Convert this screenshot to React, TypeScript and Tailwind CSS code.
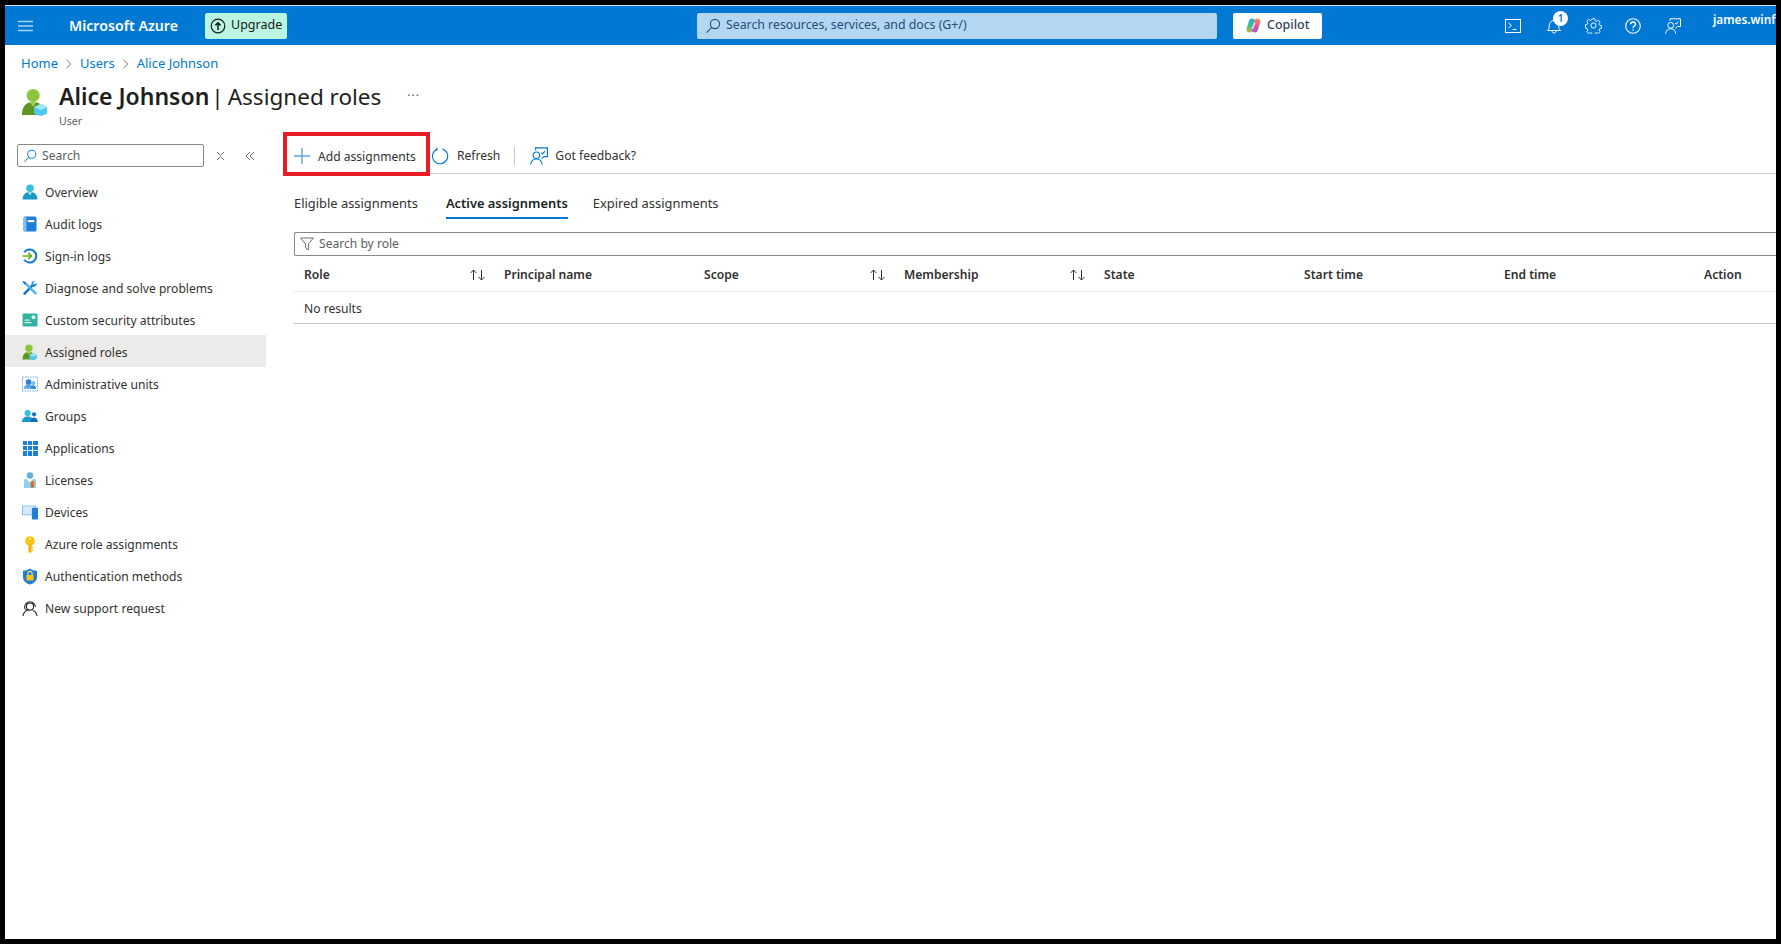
import React from "react";

function Hamburger() {
  return (
    <svg width="15" height="12" viewBox="0 0 15 12" fill="none" stroke="#a9d3f2" strokeWidth="1.3">
      <path d="M0 1.5h15M0 6h15M0 10.5h15" />
    </svg>
  );
}
function SearchGlass({ color = "#0078d4", size = 16 }: { color?: string; size?: number }) {
  return (
    <svg width={size} height={size} viewBox="0 0 16 16" fill="none" stroke={color} strokeWidth="1.1">
      <circle cx="10" cy="6" r="4.6" />
      <path d="M6.7 9.3 1.6 14.6" />
    </svg>
  );
}
function UpgradeIcon() {
  return (
    <svg width="16" height="16" viewBox="0 0 16 16" fill="none" stroke="#1b1b1b" strokeWidth="1.2">
      <circle cx="8" cy="8" r="6.8" />
      <path d="M8 12V5M5.4 7.4 8 4.8l2.6 2.6" strokeWidth="1.5" />
    </svg>
  );
}
function CopilotLogo() {
  return (
    <svg width="17" height="17" viewBox="0 0 17 17" fill="none" strokeLinecap="round">
      <defs>
        <linearGradient id="cpL" gradientUnits="userSpaceOnUse" x1="5" y1="1" x2="5" y2="16">
          <stop offset="0" stopColor="#1f9fe8" />
          <stop offset=".55" stopColor="#3ec48a" />
          <stop offset="1" stopColor="#f6a623" />
        </linearGradient>
        <linearGradient id="cpR" gradientUnits="userSpaceOnUse" x1="12" y1="1" x2="12" y2="16">
          <stop offset="0" stopColor="#f79a3e" />
          <stop offset=".5" stopColor="#e8559a" />
          <stop offset="1" stopColor="#8a5cf0" />
        </linearGradient>
      </defs>
      <path d="M7 4.500 4.500 12.500" stroke="url(#cpL)" strokeWidth="6" />
      <path d="M12.300 4.500 9.900 12.500" stroke="url(#cpR)" strokeWidth="6" />
      <path d="M9.700 6 7.500 11.500" stroke="#fff" strokeWidth="1.300" opacity=".9" />
    </svg>
  );
}
function TerminalIcon() {
  return (
    <svg width="16" height="16" viewBox="0 0 16 16" fill="none" stroke="#fff" strokeWidth="1">
      <rect x=".5" y="1.500" width="15" height="13" />
      <path d="m3.500 5 3 2.500-3 2.500M7.500 11.500h4" />
    </svg>
  );
}
function BellIcon() {
  return (
    <svg width="16" height="18" viewBox="0 0 16 18" fill="none" stroke="#fff" strokeWidth="1">
      <path d="M1.500 13.500c1.400-1.400 1.800-2.600 1.800-5 0-3 2-5 4.700-5s4.700 2 4.700 5c0 2.400.4 3.600 1.800 5Z" />
      <path d="M6 13.800c0 1.400.9 2.200 2 2.200s2-.8 2-2.200" />
    </svg>
  );
}
function GearIcon() {
  return (
    <svg width="17" height="17" viewBox="0 0 17 17" fill="none" stroke="#fff" strokeWidth="1">
      <circle cx="8.500" cy="8.500" r="2.600" />
      <path d="M7 1h3l.5 2.200 1.400.6 2-1.100 2 2.100-1.200 1.900.6 1.400 2 .5v2.900l-2 .6-.6 1.400 1.100 1.900-2 2-1.900-1.100-1.400.6-.5 2H7l-.5-2-1.400-.6-1.900 1.100-2.100-2 1.200-1.900-.6-1.400-2-.6V7.600l2-.5.6-1.400-1.200-1.900 2.100-2.100 1.900 1.100 1.400-.6Z" transform="translate(.85 .85) scale(.9)" />
    </svg>
  );
}
function HelpIcon() {
  return (
    <svg width="16" height="16" viewBox="0 0 16 16" fill="none" stroke="#fff" strokeWidth="1.100">
      <circle cx="8" cy="8" r="7.300" />
      <path d="M5.600 6.200C5.700 4.800 6.800 4 8 4c1.400 0 2.500.9 2.500 2.200 0 1.800-2.500 1.900-2.500 3.800" strokeWidth="1.400" />
      <circle cx="8" cy="12" r=".8" fill="#fff" stroke="none" />
    </svg>
  );
}
function FeedbackIcon({ color = "#fff", size = 16 }: { color?: string; size?: number }) {
  return (
    <svg width={size} height={size} viewBox="0 0 16 16" fill="none" stroke={color} strokeWidth="1">
      <circle cx="5.700" cy="7.300" r="2.900" />
      <path d="M.6 15.600c.3-2.900 2.300-4.900 5.100-4.900s4.800 2 5.100 4.900" />
      <path d="M5 2.800V.8h10.500v7.700h-3l-2.300 1.800" />
      <path d="m10 5 1.200 1.200L13.300 3.600" />
    </svg>
  );
}
function RefreshIcon() {
  return (
    <svg width="18" height="18" viewBox="0 0 18 18" fill="none" stroke="#0078d4" strokeWidth="1.100">
      <path d="M6 2.200A7.600 7.600 0 1 0 11.400 1.900" />
      <path d="M5.400 .6 6.200 2.400 4.300 3.400" />
    </svg>
  );
}
function PlusIcon() {
  return (
    <svg width="16" height="16" viewBox="0 0 16 16" fill="none" stroke="#5fa8e0" strokeWidth="1.400">
      <path d="M8 0v16M0 8h16" />
    </svg>
  );
}
function FunnelIcon() {
  return (
    <svg width="14" height="14" viewBox="0 0 14 14" fill="none" stroke="#605e5c" strokeWidth=".9">
      <path d="M.6 1h12.800L8.400 7v6l-2.800-2V7Z" />
    </svg>
  );
}
function SortIcon() {
  return (
    <svg width="17" height="12" viewBox="0 0 17 12" fill="none" stroke="#323130" strokeWidth="1">
      <path d="M4.500 11V1M1.500 4l3-3 3 3M12.500 1v10M9.500 8l3 3 3-3" />
    </svg>
  );
}
function Chevron() {
  return (
    <svg width="8" height="10" viewBox="0 0 8 10" fill="none" stroke="#605e5c" strokeWidth=".9">
      <path d="m1.500 .8 4.300 4.200-4.300 4.200" />
    </svg>
  );
}

function UserGreen({ size = 16 }: { size?: number }) {
  return (
    <svg width={size} height={size} viewBox="0 0 28 30">
      <circle cx="12" cy="8" r="7" fill="#8cc63f" />
      <path d="M0 29c0-9 4-14 12-14s12 5 12 14Z" fill="#5e9624" />
      <path d="M8.500 15.200 12 20l3.500-4.800Z" fill="#a5d35a" />
      <path d="m20 17 7 3.500v7L20 30l-7-2.500v-7Z" fill="#50c8ec" />
      <path d="m20 17 7 3.500-7 3-7-3Z" fill="#9ee4f7" />
    </svg>
  );
}
function Overview() {
  return (
    <svg width="16" height="16" viewBox="0 0 16 16">
      <circle cx="8" cy="4.200" r="3.800" fill="#32bedd" />
      <path d="M.6 15.600c0-5 2.800-7.600 7.400-7.600s7.400 2.600 7.400 7.600Z" fill="#1a9ac9" />
      <path d="M6 8.200h4L8 11.500Z" fill="#c4eff9" />
    </svg>
  );
}
function AuditLogs() {
  return (
    <svg width="16" height="16" viewBox="0 0 16 16">
      <rect x="1.500" y=".5" width="13" height="15" rx="1.500" fill="#1f7fd8" />
      <rect x="1.500" y=".5" width="3" height="15" rx="1.200" fill="#7fc0f0" />
      <rect x="5.800" y="4" width="6.400" height="2.200" fill="#fff" />
    </svg>
  );
}
function SignIn() {
  return (
    <svg width="16" height="16" viewBox="0 0 16 16" fill="none">
      <path d="M2.200 4.300A6.600 6.600 0 1 1 2.200 11.700" stroke="#0f78cf" strokeWidth="2" />
      <path d="M.5 8h8.800M6.200 4.800 9.500 8l-3.300 3.200" stroke="#6cae1e" strokeWidth="1.700" />
    </svg>
  );
}
function Tools() {
  return (
    <svg width="16" height="16" viewBox="0 0 16 16" fill="none">
      <path d="M1.800 14.300 11 4.800" stroke="#1277c5" strokeWidth="2.400" />
      <path d="M15 3.500a3.400 3.400 0 0 1-4.500 3.200L9.500 4.800C9 2.600 10.500.8 13 .8l-2 2.200 1 1.200Z" fill="#1e90db" />
      <path d="M2 1.800 14.300 14" stroke="#45b2e8" strokeWidth="2.400" />
      <path d="M1 .8 4 3.500 3 4.500.6 2Z" fill="#0f6cb5" />
    </svg>
  );
}
function Attributes() {
  return (
    <svg width="16" height="16" viewBox="0 0 16 16">
      <rect x=".5" y="1.500" width="15" height="13" rx="1" fill="#32b3a0" />
      <path d="M2.500 7.500h5v1.200h-5zM2.500 10h7v1.200h-7z" fill="#d7f4ee" />
      <circle cx="11.500" cy="5.200" r="2" fill="#d7f4ee" />
    </svg>
  );
}
function AdminUnits() {
  return (
    <svg width="17" height="17" viewBox="0 0 17 17" fill="none">
      <rect x=".5" y=".5" width="16" height="15" stroke="#4aa0e6" strokeDasharray="1.500 1.200" />
      <circle cx="7" cy="6" r="3" fill="#2f7fd6" />
      <path d="M2 13c0-3 2-4.800 5-4.800s5 1.800 5 4.800Z" fill="#5aa6ec" />
      <circle cx="12" cy="7" r="2.200" fill="#7dbbf2" />
      <path d="M9.500 13c0-2 1-3.600 2.500-3.600s3 1.600 3 3.600Z" fill="#2f7fd6" />
    </svg>
  );
}
function Groups() {
  return (
    <svg width="17" height="16" viewBox="0 0 17 16">
      <circle cx="6" cy="4.800" r="3.300" fill="#32bedd" />
      <path d="M0 14.500c0-4 2.400-6 6-6s6 2 6 6Z" fill="#1a9ac9" />
      <circle cx="12.800" cy="6.200" r="2.300" fill="#1277c5" />
      <path d="M9 14.500c0-3 1.600-5 3.800-5s4 2 4 5Z" fill="#0f6cb5" />
    </svg>
  );
}
function Apps() {
  return (
    <div className="grid grid-cols-3 gap-[1px] w-[15px] h-[15px]">
      {Array.from({ length: 9 }).map((_, i) => (
        <div key={i} className="bg-[#1a7fd6]" />
      ))}
    </div>
  );
}
function Licenses() {
  return (
    <svg width="16" height="17" viewBox="0 0 16 17">
      <circle cx="8" cy="3.500" r="3.200" fill="#5fb4dc" />
      <path d="M2 16V8.500C2 7.500 3 7 4 7h8c1 0 2 .5 2 1.500V16Z" fill="#8fd0ec" />
      <path d="M5 7h6l-3 4Z" fill="#fff" />
      <circle cx="10.300" cy="11" r="2.200" fill="#e8742a" />
      <path d="M9 12.500h2.600V16l-1.300-.8L9 16Z" fill="#d9541e" />
    </svg>
  );
}
function Devices() {
  return (
    <svg width="17" height="16" viewBox="0 0 17 16">
      <rect x="0" y="1" width="15" height="10.500" rx=".8" fill="#7fbdf0" />
      <rect x="1" y="2" width="13" height="8.500" fill="#d5ebfb" />
      <rect x="10.500" y="3.500" width="6.500" height="12.500" rx=".8" fill="#1f7fd8" />
    </svg>
  );
}
function KeyIcon() {
  return (
    <svg width="16" height="17" viewBox="0 0 16 17">
      <circle cx="8" cy="5" r="4.800" fill="#f9c511" />
      <circle cx="8" cy="3" r="1.100" fill="#fff3bf" />
      <path d="M6.400 8h3.200v8L8 17l-1.600-1.200Z" fill="#f2b705" />
      <path d="M9.600 11h1.500v1.300H9.600zM9.600 13.300h1.500v1.300H9.600z" fill="#f2b705" />
    </svg>
  );
}
function Shield() {
  return (
    <svg width="16" height="17" viewBox="0 0 16 17">
      <path d="M8 .4c2 1.500 4.500 2.200 7 2.300v6.500c0 3.500-3 6-7 7.400C4 15.200 1 12.700 1 9.200V2.700C3.500 2.600 6 1.900 8 .4Z" fill="#1f7fd8" />
      <rect x="4.500" y="7" width="7" height="5.500" rx=".6" fill="#f9c511" />
      <path d="M5.900 7V5.500a2.100 2.100 0 0 1 4.200 0V7" fill="none" stroke="#f9d86b" strokeWidth="1.200" />
    </svg>
  );
}
function Support() {
  return (
    <svg width="17" height="17" viewBox="0 0 17 17" fill="none" stroke="#1b1a19" strokeWidth="1.100">
      <circle cx="8.500" cy="6.500" r="3.800" />
      <path d="M2.800 7a5.700 5.700 0 0 1 11.400 0M2.800 7c0 1.500.7 2.800 1.700 3.200h3" />
      <path d="M1 16.500c.5-3 2.500-5.300 4.600-5.800M16 16.500c-.5-3-2.500-5.300-4.600-5.800" />
    </svg>
  );
}

const navItems: { label: string; icon: React.ReactNode; active?: boolean }[] = [
  { label: "Overview", icon: <Overview /> },
  { label: "Audit logs", icon: <AuditLogs /> },
  { label: "Sign-in logs", icon: <SignIn /> },
  { label: "Diagnose and solve problems", icon: <Tools /> },
  { label: "Custom security attributes", icon: <Attributes /> },
  { label: "Assigned roles", icon: <UserGreen />, active: true },
  { label: "Administrative units", icon: <AdminUnits /> },
  { label: "Groups", icon: <Groups /> },
  { label: "Applications", icon: <Apps /> },
  { label: "Licenses", icon: <Licenses /> },
  { label: "Devices", icon: <Devices /> },
  { label: "Azure role assignments", icon: <KeyIcon /> },
  { label: "Authentication methods", icon: <Shield /> },
  { label: "New support request", icon: <Support /> },
];

const columns: { label: string; sort?: boolean }[] = [
  { label: "Role", sort: true },
  { label: "Principal name" },
  { label: "Scope", sort: true },
  { label: "Membership", sort: true },
  { label: "State" },
  { label: "Start time" },
  { label: "End time" },
  { label: "Action" },
];

export default function App() {
  return (
    <div className="w-[1781px] h-[944px] overflow-hidden bg-white border-solid border-black border-l-[5px] border-r-[5px] border-t-[5px] border-b-[5px] flex flex-col font-['Noto_Sans',sans-serif] text-[12.1px] text-[#323130]">
      {/* Top bar */}
      <header className="h-10 shrink-0 flex items-center bg-[#0078d4] border-t border-[#cfe4f5] text-white">
        <div className="w-[13px] shrink-0" />
        <span className="shrink-0"><Hamburger /></span>
        <span className="shrink-0 ml-[36px] w-[136px] text-[14.2px] font-semibold whitespace-nowrap">Microsoft Azure</span>
        <button className="shrink-0 h-[26px] w-[82px] flex items-center gap-[5px] pl-[5px] rounded-[2px] bg-[#b9f5e0] text-[#1b1b1b] text-[12.5px]">
          <UpgradeIcon />
          <span>Upgrade</span>
        </button>
        <div className="shrink-0 ml-[410px] w-[520px] h-[26px] flex items-center gap-[5px] pl-[8px] rounded-[2px] bg-[#b3d6f2] text-[#1f4e79] text-[12.3px]">
          <SearchGlass color="#1f4e79" />
          <span>Search resources, services, and docs (G+/)</span>
        </div>
        <button className="shrink-0 ml-[16px] w-[89px] h-[26px] flex items-center gap-[5px] pl-[12px] rounded-[2px] bg-white text-[#33415c] text-[12.5px] font-medium">
          <CopilotLogo />
          <span>Copilot</span>
        </button>
        <div className="shrink-0 ml-[183px] flex items-center"><TerminalIcon /></div>
        <div className="shrink-0 relative ml-[25px] flex items-center">
          <BellIcon />
          <span className="absolute -top-[6px] left-[7px] w-[15px] h-[15px] rounded-full bg-white text-[#0078d4] text-[10px] font-semibold flex items-center justify-center">1</span>
        </div>
        <div className="shrink-0 ml-[23px] flex items-center"><GearIcon /></div>
        <div className="shrink-0 ml-[23px] flex items-center"><HelpIcon /></div>
        <div className="shrink-0 ml-[24px] flex items-center"><FeedbackIcon /></div>
        <span className="flex-1 min-w-0 ml-[32px] self-start mt-[5px] text-[11.8px] font-semibold whitespace-nowrap">james.winf</span>
      </header>

      {/* Breadcrumb */}
      <nav className="shrink-0 h-[26px] pt-[12px] pl-[16px] flex items-center gap-[7px] text-[#0078d4] text-[13px]">
        <span>Home</span>
        <Chevron />
        <span>Users</span>
        <Chevron />
        <span>Alice Johnson</span>
      </nav>

      {/* Title */}
      <div className="shrink-0 h-[61px] flex pl-[16px] pt-[10px]">
        <div className="mt-[7px]"><UserGreen size={28} /></div>
        <div className="ml-[10px]">
          <h1 className="text-[22.5px] leading-[29px] text-[#201f1e] whitespace-nowrap">
            <span className="font-semibold text-[23px]">Alice Johnson</span>
            <span className="ml-[2px]">|</span>
            <span className="ml-[4px]">Assigned roles</span>
            <span className="ml-[26px] text-[12px] align-[5px] tracking-[1px] text-[#605e5c]">···</span>
          </h1>
          <div className="mt-[3px] text-[10.6px] leading-[14px] text-[#605e5c]">User</div>
        </div>
      </div>

      {/* Body */}
      <div className="flex-1 flex min-h-0">
        <aside className="w-[261px] shrink-0 pt-[12px]">
          <div className="flex items-center pl-[12px]">
            <div className="w-[187px] h-[23px] flex items-center gap-[5px] pl-[5px] border border-[#8a8886] rounded-[2px] text-[#605e5c]">
              <SearchGlass size={14} />
              <span className="mt-[1px]">Search</span>
            </div>
            <svg className="ml-[12px]" width="9" height="10" viewBox="0 0 9 10" fill="none" stroke="#605e5c" strokeWidth=".9">
              <path d="M1 1l3.500 3.300L8 1M1 9l3.500-3.300L8 9" />
            </svg>
            <svg className="ml-[20px]" width="10" height="10" viewBox="0 0 10 10" fill="none" stroke="#605e5c" strokeWidth=".9">
              <path d="M5 1 1 5l4 4M9 1 5 5l4 4" />
            </svg>
          </div>
          <ul className="mt-[8px]">
            {navItems.map((n) => (
              <li
                key={n.label}
                className={`h-8 flex items-center pl-[17px] pt-[2px] text-[#323130] ${n.active ? "bg-[#edebe9]" : ""}`}
              >
                <span className="w-4 flex justify-center shrink-0">{n.icon}</span>
                <span className="ml-[7px] mt-[2px] whitespace-nowrap">{n.label}</span>
              </li>
            ))}
          </ul>
        </aside>

        <main className="flex-1 min-w-0 pl-[17px] overflow-hidden">
          {/* Toolbar */}
          <div className="h-[42px] pt-[7px] flex items-center border-b border-[#d2d0ce]">
            <button className="relative z-10 self-start -mt-[7px] w-[147px] h-[44px] shrink-0 flex items-center pl-[7px] pt-[3px] border-[4px] border-[#e81c24] text-[#323130]">
              <PlusIcon />
              <span className="ml-[8px] mt-[4px] whitespace-nowrap">Add assignments</span>
            </button>
            <span className="ml-[1px]"><RefreshIcon /></span>
            <span className="ml-[8px]">Refresh</span>
            <span className="ml-[14px] w-px h-[18px] bg-[#c8c6c4]" />
            <span className="ml-[15px]"><FeedbackIcon color="#0078d4" size={18} /></span>
            <span className="ml-[7px]">Got feedback?</span>
          </div>

          {/* Tabs */}
          <div className="mt-[14px] ml-[11px] h-[31px] flex items-start gap-[25px] text-[12.9px]">
            <div className="h-[31px] pt-[6px] mr-[3px]">Eligible assignments</div>
            <div className="h-[31px] pt-[6px] font-semibold border-b-2 border-[#0078d4] text-[#201f1e]">Active assignments</div>
            <div className="h-[31px] pt-[6px]">Expired assignments</div>
          </div>

          {/* Filter + table */}
          <div className="ml-[11px]">
            <div className="mt-[13px] h-[24px] flex items-center gap-[5px] pl-[5px] border border-r-0 border-[#8a8886] rounded-l-[2px] text-[#605e5c]">
              <FunnelIcon />
              <span className="mt-[1px]">Search by role</span>
            </div>
            <div className="flex h-[36px] pt-[4px] items-center border-b border-[#edebe9] w-[1600px] font-semibold text-[#323130]">
              {columns.map((c) => (
                <div key={c.label} className="w-[200px] shrink-0 pl-[10px] pr-[8px] flex items-center justify-between">
                  <span>{c.label}</span>
                  {c.sort && <SortIcon />}
                </div>
              ))}
            </div>
            <div className="h-[32px] pt-[4px] flex items-center pl-[10px] border-b border-[#c8c6c4]">No results</div>
          </div>
        </main>
      </div>
    </div>
  );
}
